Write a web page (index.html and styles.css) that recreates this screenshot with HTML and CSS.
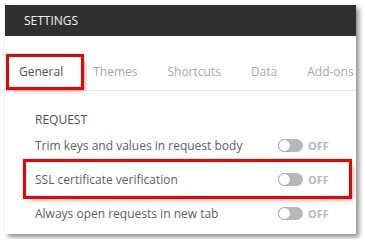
FILE: index.html
```html
<!DOCTYPE html>
<html lang="en">
<head>
    <meta charset="UTF-8">
    <title>Settings</title>
    <link rel="stylesheet" href="styles.css">
</head>
<body>
    <div class="panel">
        <header class="panel-header">SETTINGS</header>

        <nav class="tabs">
            <a class="tab active marked">General</a>
            <a class="tab">Themes</a>
            <a class="tab">Shortcuts</a>
            <a class="tab">Data</a>
            <a class="tab">Add-ons</a>
        </nav>

        <section class="section">
            <h3>REQUEST</h3>
            <div class="row">
                <span class="label">Trim keys and values in request body</span>
                <span class="switch"><span class="knob"></span></span>
                <span class="state">OFF</span>
            </div>
            <div class="row marked">
                <span class="label">SSL certificate verification</span>
                <span class="switch"><span class="knob"></span></span>
                <span class="state">OFF</span>
            </div>
            <div class="row">
                <span class="label">Always open requests in new tab</span>
                <span class="switch"><span class="knob"></span></span>
                <span class="state">OFF</span>
            </div>
        </section>
    </div>
</body>
</html>
```

FILE: styles.css
```css
/* Global */
body {
    margin: 0;
    padding: 5px;
    background: white;
    font-family: "Open Sans", Arial, sans-serif;
}

/* Panel */
.panel {
    width: 351px;
    height: 229px;
    background: white;
    overflow: hidden;
    box-shadow: 3px 3px 5px rgba(0, 0, 0, 0.45);
}

.panel-header {
    height: 31px;
    line-height: 31px;
    padding-left: 19px;
    background-color: #303030;
    color: #f2f2f2;
    font-size: 12px;
}

/* Tabs */
.tabs {
    display: flex;
    height: 55px;
    padding: 21px 0 0 4px;
    box-sizing: border-box;
    border-bottom: 1px solid #e6e6e6;
    white-space: nowrap;
}

.tab {
    padding: 0 15px;
    height: 30px;
    line-height: 30px;
    font-size: 12px;
    color: #a8a8a8;
}

.tab.active {
    color: #505050;
}

/* Annotation boxes */
.marked {
    outline: 3px solid #f00000;
    box-shadow: 4px 4px 4px rgba(0, 0, 0, 0.35);
}

.tab.marked {
    padding: 0 18px 0 10px;
    margin-right: -3px;
}

/* Section */
.section {
    padding: 21px 7px 0 21px;
}

.section h3 {
    margin: 0 0 0 9px;
    height: 16px;
    line-height: 16px;
    font-size: 12px;
    font-weight: normal;
    color: #505050;
}

.row {
    display: flex;
    align-items: center;
    height: 34px;
    padding-left: 9px;
    font-size: 12px;
    color: #606060;
}

.row .label {
    flex: 1;
}

.switch {
    position: relative;
    width: 25px;
    height: 13px;
    border-radius: 7px;
    background-color: #b8b8b8;
}

.knob {
    position: absolute;
    left: 0;
    top: 0;
    width: 11px;
    height: 11px;
    border-radius: 50%;
    background: white;
    border: 1px solid #a8a8a8;
}

.state {
    width: 41px;
    padding-left: 5px;
    font-size: 11px;
    font-weight: bold;
    color: #b8b8b8;
}
```
